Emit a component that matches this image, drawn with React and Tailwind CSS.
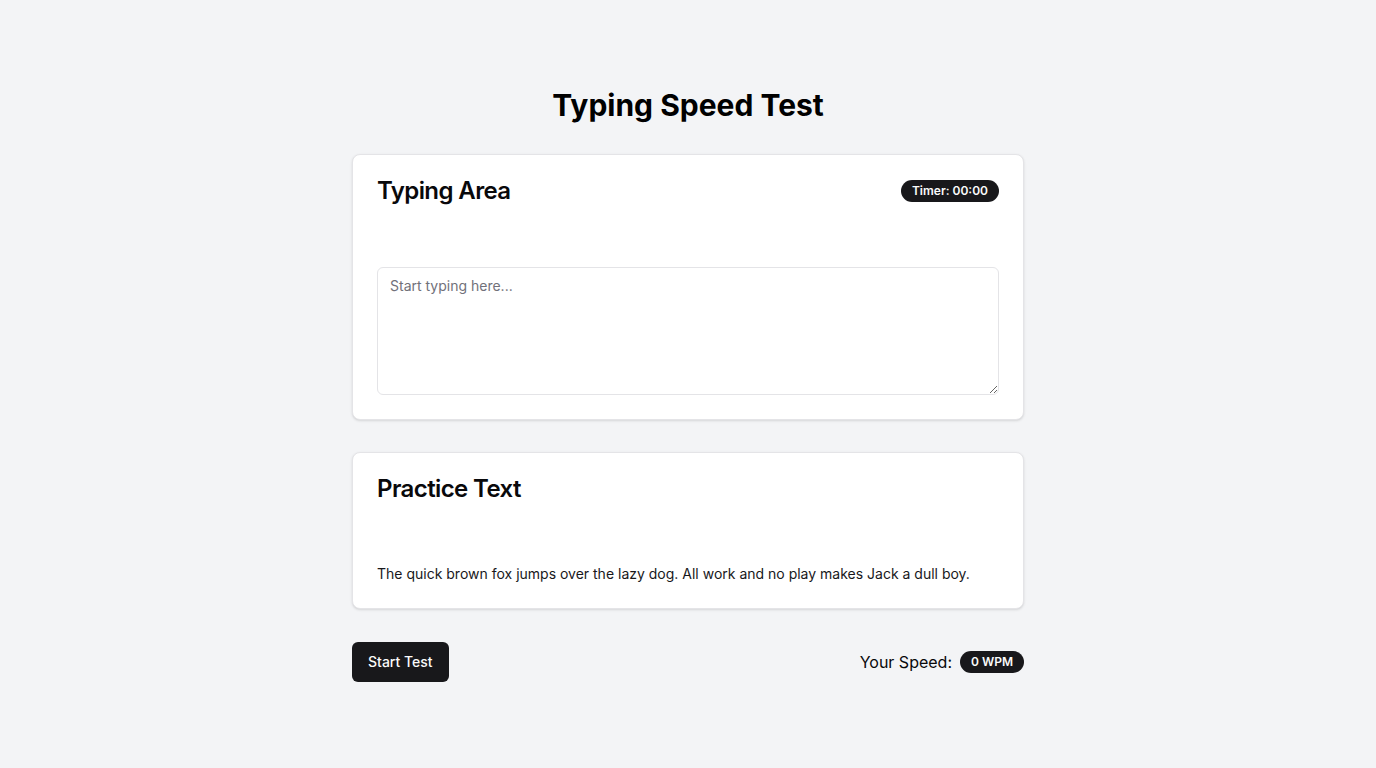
import React from "react";

export default function App() {
  return (
    <div
      className="min-h-screen w-full bg-[#f3f4f6] flex flex-col items-center justify-center text-[#09090b]"
      style={{ fontFamily: "Inter, 'Noto Sans', sans-serif" }}
    >
      <div className="w-[672px] flex flex-col">
        <h1 className="text-[30px] leading-[36px] font-bold text-center text-black">
          Typing Speed Test
        </h1>
        <div className="mt-[31px] bg-white border border-[#e4e4e7] rounded-lg shadow-sm">
          <div className="p-6 flex flex-row items-center justify-between">
            <h2 className="text-2xl leading-6 font-semibold tracking-tight">Typing Area</h2>
            <span className="inline-flex items-center rounded-full bg-[#18181b] text-[#fafafa] text-xs font-semibold px-[11px] h-[22px]">
              Timer: 00:00
            </span>
          </div>
          <div className="px-6 pb-6 pt-10">
            <textarea
              className="block w-full h-[128px] rounded-md border border-[#e4e4e7] bg-white px-3 py-2 text-sm leading-5 placeholder:text-[#71717a] outline-none"
              placeholder="Start typing here..."
            />
          </div>
        </div>
        <div className="mt-8 bg-white border border-[#e4e4e7] rounded-lg shadow-sm">
          <div className="p-6">
            <h2 className="text-2xl leading-6 font-semibold tracking-tight">Practice Text</h2>
          </div>
          <div className="px-6 pb-6 pt-[39px]">
            <p className="text-sm leading-5 text-[#18181b]">
              The quick brown fox jumps over the lazy dog. All work and no play makes Jack a dull boy.
            </p>
          </div>
        </div>
        <div className="mt-[33px] flex items-center justify-between">
          <button className="h-10 px-4 rounded-md bg-[#18181b] text-[#fafafa] text-sm font-medium">
            Start Test
          </button>
          <div className="flex items-center gap-2">
            <span className="text-base">Your Speed:</span>
            <span className="inline-flex items-center rounded-full bg-[#18181b] text-[#fafafa] text-xs font-semibold px-[11px] h-[22px]">
              0 WPM
            </span>
          </div>
        </div>
      </div>
    </div>
  );
}
